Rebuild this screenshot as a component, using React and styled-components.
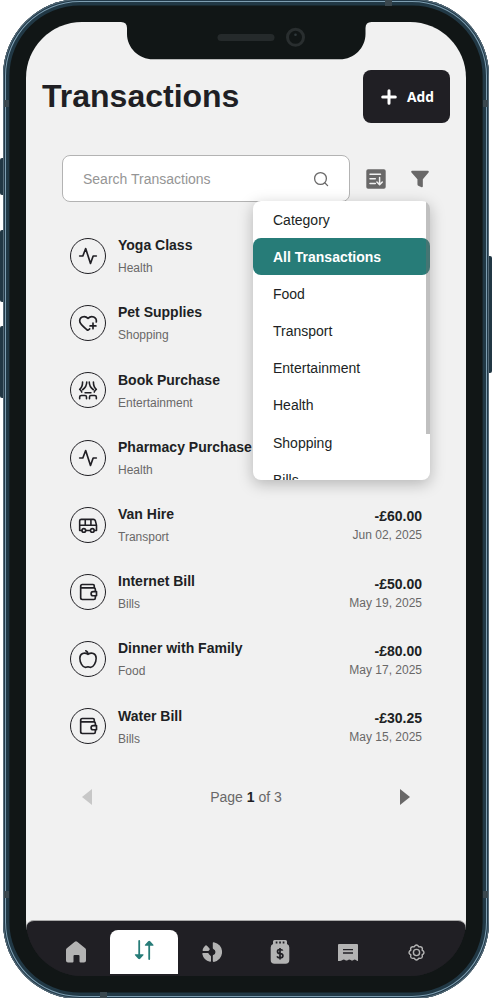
import React from "react";
import styled, { createGlobalStyle } from "styled-components";

const GlobalStyle = createGlobalStyle`
  *, *::before, *::after { box-sizing: border-box; }
  html, body { margin: 0; background: #fff; overflow: hidden; }
  body { font-family: "Liberation Sans", Arial, Helvetica, sans-serif; color: #201f24; }
  button, input { font: inherit; border: 0; padding: 0; background: none; color: inherit; }
  svg { display: block; flex: none; }
`;

const Stage = styled.div`
  position: relative;
  width: 492px;
  height: 998px;
  overflow: hidden;
`;

const Device = styled.div`
  position: relative;
  width: 486px;
  height: 1000px;
  margin: -1px 3px 0;
  padding: 23px 23px;
  border-radius: 77px;
  background: #111616;
  box-shadow: inset 0 0 0 1px #566b78, inset 0 0 0 2px #213949,
    inset 0 0 0 3px #7e9eb1, inset 0 0 0 6.4px #213845;
`;

const SideKey = styled.span`
  position: absolute;
  top: ${(p) => p.$top}px;
  ${(p) => p.$side}: 0;
  width: 4px;
  height: ${(p) => p.$length}px;
  border-radius: ${(p) => (p.$side === "left" ? "2px 0 0 2px" : "0 2px 2px 0")};
  background: #213744;
`;

const Antenna = styled.span`
  position: absolute;
  top: ${(p) => p.$top}px;
  left: ${(p) => p.$left}px;
  width: ${(p) => (p.$flat ? 7 : 5)}px;
  height: ${(p) => (p.$flat ? 5.5 : 7)}px;
  background: #3a474e;
`;

const NotchShape = styled.svg`
  position: absolute;
  top: 21px;
  left: 118px;
`;

const Screen = styled.main`
  display: flex;
  flex-direction: column;
  width: 440px;
  height: 954px;
  border-radius: 56px;
  background: linear-gradient(#f1f1f1 908px, #201f24 908px);
  overflow: hidden;
`;

const Header = styled.header`
  display: flex;
  align-items: center;
  justify-content: space-between;
  height: 53px;
  margin: 48px 16px 0;
`;

const Title = styled.h1`
  margin: 0 0 1px;
  font-size: 32px;
  line-height: 52px;
`;

const AddButton = styled.button`
  display: flex;
  align-items: center;
  gap: 10px;
  width: 87px;
  height: 53px;
  padding-left: 18px;
  border-radius: 8px;
  background: #201f24;
  color: #fff;
  font: 700 13.8px/18px "Open Sans", sans-serif;
`;

const Toolbar = styled.div`
  display: flex;
  align-items: center;
  margin: 32px 36px 0;
  height: 47px;
`;

const SearchBox = styled.label`
  display: flex;
  align-items: center;
  justify-content: space-between;
  width: 288px;
  height: 47px;
  padding: 0 20px;
  border: 1px solid #b3b3b3;
  border-radius: 8px;
  background: #fff;
`;

const SearchInput = styled.input`
  width: 190px;
  font-size: 14px;
  outline: 0;
  &::placeholder { color: #959595; opacity: 1; }
`;

const SortButton = styled.button`
  margin-left: 16px;
`;

const FilterControl = styled.div`
  position: relative;
  margin-left: 25px;
`;

const Menu = styled.ul`
  position: absolute;
  top: 31px;
  right: -1px;
  z-index: 2;
  width: 177px;
  height: 279px;
  margin: 0;
  padding: 0;
  list-style: none;
  border-radius: 8px;
  background: #fff;
  overflow: hidden;
  box-shadow: 0 4px 15px rgba(0, 0, 0, 0.25);
`;

const MenuItem = styled.li`
  height: 37.2px;
  padding-left: 20px;
  border-radius: 8px;
  font-size: 14px;
  line-height: 38px;
  font-weight: ${(p) => (p.$active ? 700 : 400)};
  background: ${(p) => (p.$active ? "#277c78" : "transparent")};
  color: ${(p) => (p.$active ? "#fff" : "#201f24")};
`;

const MenuScrollThumb = styled.span`
  position: absolute;
  top: 0;
  right: 0;
  width: 4px;
  height: 233px;
  background: rgba(110, 110, 110, 0.43);
`;

const List = styled.ul`
  margin: 20.5px 44px 0;
  padding: 0;
  list-style: none;
`;

const Row = styled.li`
  display: flex;
  align-items: center;
  gap: 12px;
  height: 67.2px;
`;

const IconRing = styled.span`
  display: flex;
  align-items: center;
  justify-content: center;
  width: 36px;
  height: 36px;
  border: 1px solid #201f24;
  border-radius: 50%;
`;

const Details = styled.div`
  display: flex;
  flex-direction: column;
  gap: 7px;
  flex: 1;
  padding-top: 1.4px;
`;

const Name = styled.span`
  font-size: 14px;
  line-height: 16px;
  font-weight: 700;
  white-space: nowrap;
`;

const Caption = styled.span`
  font-size: 12px;
  line-height: 16px;
  color: #696868;
`;

const Money = styled.div`
  display: flex;
  flex-direction: column;
  align-items: flex-end;
  gap: 3px;
  padding-top: 2px;
`;

const Pager = styled.nav`
  display: flex;
  align-items: center;
  justify-content: space-between;
  height: 20px;
  margin: 26.5px 56px 0;
  font-size: 14px;
  color: #696868;
  strong { color: #201f24; }
`;

const TabBar = styled.nav`
  display: flex;
  align-items: flex-end;
  height: 56px;
  margin-top: auto;
  padding: 0 16px 2px;
  border-top: 1px solid #aaa;
  border-radius: 8px 8px 0 0;
  background: #201f24;
`;

const Tab = styled.button`
  display: flex;
  align-items: center;
  justify-content: center;
  width: 68px;
  height: 44px;
  padding-bottom: ${(p) => (p.$active ? "5px" : 0)};
  border-radius: 8px 8px 0 0;
  background: ${(p) => (p.$active ? "#fff" : "transparent")};
  color: ${(p) => (p.$active ? "#277c78" : "#b3b3b3")};
`;

const Line = ({ size = 20, weight = 2, children }) => (
  <svg width={size} height={size} viewBox="0 0 24 24" fill="none" stroke="currentColor"
    strokeWidth={weight} strokeLinecap="round" strokeLinejoin="round">{children}</svg>
);

const categoryIcons = {
  Health: <Line><path d="M2 12h3.8L9.200 3l5.800 18 3.200-9H22" /></Line>,
  Shopping: (
    <Line>
      <path d="M22 10.800c.8-5.800-5.800-8.800-10-4.300C7.800 2 .8 5.200 2.300 11.200c.9 2.700 5 6 8.400 8.900q1.200 1 2.500-.3l.8-.8M18 12v7M14.500 15.500h7" />
    </Line>
  ),
  Entertainment: (
    <Line weight={1.9}>
      <path d="M5.500 2.500c0 4-1.200 7-3.500 8.800 1.400 1 2.200 2.200 2.500 3.200M10.500 2.500c0 4.500-1.800 7-5 9.200M18.500 2.500c0 4 1.200 7 3.500 8.800-1.400 1-2.200 2.200-2.500 3.200M13.500 2.500c0 4.500 1.800 7 5 9.200M8.500 15.300h7M2 22.500v-2q0-2 2-2h4.500q1.700 0 1.700 2v2M13.800 22.500v-2q0-2 1.700-2H20q2 0 2 2v2" />
    </Line>
  ),
  Transport: (
    <Line weight={1.9}>
      <path d="M4.500 18.500H2V7q0-1.800 2-1.800h14.500q1.800 0 2.300 1.800l1.400 5.200v6.300h-2.500M9.500 18.500h5M2 12.200h20M8.700 5.200v7M15.500 5.200v7" />
      <circle cx="7" cy="18.500" r="2.200" /><circle cx="17.200" cy="18.500" r="2.200" />
    </Line>
  ),
  Bills: (
    <Line>
      <path d="M19.500 7V4.500q0-1.500-1.500-1.500H5.200Q3.200 3 3.200 5t2 2H19q1.800 0 1.800 1.800V11M3.200 5v14q0 2 2 2H19q1.800 0 1.800-1.800V17" />
      <path d="M22.200 11.500h-4a2.500 2.500 0 0 0 0 5h4Z" />
    </Line>
  ),
  Food: (
    <Line weight={1.900}>
      <path d="M12 6.500C8 3.500 2.200 5 2.200 11c0 5 3.200 11 6.800 11 1.300 0 2-.6 3-.6s1.700.6 3 .6c3.600 0 6.800-6 6.800-11 0-6-5.800-7.500-9.800-4.500ZM12 6.500c0-2-1-3.700-2.700-4.300" />
    </Line>
  ),
};

const transactions = [
  { name: "Yoga Class", category: "Health" },
  { name: "Pet Supplies", category: "Shopping" },
  { name: "Book Purchase", category: "Entertainment" },
  { name: "Pharmacy Purchase", category: "Health" },
  { name: "Van Hire", category: "Transport", amount: "-£60.00", date: "Jun 02, 2025" },
  { name: "Internet Bill", category: "Bills", amount: "-£50.00", date: "May 19, 2025" },
  { name: "Dinner with Family", category: "Food", amount: "-£80.00", date: "May 17, 2025" },
  { name: "Water Bill", category: "Bills", amount: "-£30.25", date: "May 15, 2025" },
];

const menuItems = ["Category", "All Transactions", "Food", "Transport", "Entertainment", "Health", "Shopping", "Bills"];

const tabs = [
  ["Home", <svg width="20" height="22" viewBox="0 0 20 22"><path fill="currentColor" d="M0 8.900Q0 7.900.8 7.200L8.800.7q1.200-1 2.400 0l8 6.500q.8.700.8 1.700V19.500q0 2-2 2h-3.500q-1 0-1-1V15q0-1-1-1h-4q-1 0-1 1v5.500q0 1-1 1H2q-2 0-2-2Z" /></svg>],
  ["Transactions", <svg width="20" height="20" viewBox="0 0 20 20"><path d="M5.200 1v14M15.200 19V5" fill="none" stroke="currentColor" strokeWidth="1.800" strokeLinecap="round" /><path fill="currentColor" d="M1.400 14.200h7.600q1 .2.400 1.100l-3.200 3.500q-1 .8-2 0L1 15.300q-.6-.9.400-1.100ZM11.400 5.800H19q1-.2.400-1.100l-3.200-3.500q-1-.8-2 0L11 4.700q-.6.900.4 1.100Z" /></svg>],
  ["Budgets", <svg width="20" height="20" viewBox="0 0 20 20"><g fill="currentColor"><path d="M10.800 1q0-1 1-.8a10 10 0 0 1 0 19.700q-1 .1-1-.8v-5a1 1 0 0 1 .5-1 3.300 3.300 0 0 0 0-6.200 1 1 0 0 1-.5-1Z" /><path d="M9 19q0 1-1 .7A10 10 0 0 1 .3 12q-.2-1 .8-1h4.700q.7 0 1 .8a3.300 3.300 0 0 0 1.500 1.600q.7.300.7 1Z" /><path d="M1.300 9Q.4 9 .6 8q.6-2.400 2.500-4.300 1-.9 1.900.1l2.500 2.700q.6.700 0 1.300-.6 1.200-1.500 1.200Z" /></g></svg>],
  ["Pots", <svg width="20" height="24" viewBox="0 0 20 24"><path fill="currentColor" d="M4.500 0h11q1.500 0 1.500 1.500V4q2.300.8 2.300 3.500V20q0 3.800-3.800 3.800h-11Q.7 23.800.7 20V7.500Q.7 4.800 3 4V1.500Q3 0 4.500 0Z" /><path d="M5.700 2.500h1.700M9.200 2.500h1.700M12.700 2.500h1.700" stroke="#201f24" strokeWidth="1.800" /><path d="M12.700 10.700q-.5-1.200-2.700-1.200-2.500 0-2.500 2t2.500 2.100q2.900.1 2.900 2.200t-2.900 2.100q-2.300 0-3-1.500M10 8v11.500" fill="none" stroke="#201f24" strokeWidth="1.700" /></svg>],
  ["Bills", <svg width="20" height="17" viewBox="0 0 20 17"><path fill="currentColor" d="M1 0h18q1 0 1 1v16q-1 0-2.100-1-1.200-1-2.400 0-1.400 1-2.800 0-1.400-1-2.800 0-1.400 1-2.800 0-1.400-1-2.600 0-1.400 1-2.800 1-1.200 0-1.700 0V1q0-1 1-1Z" /><path d="M5 5.700h10M5 9h10" stroke="#201f24" strokeWidth="1.300" /></svg>],
  ["Settings", <svg width="17" height="17" viewBox="0 0 24 24" fill="none" stroke="currentColor" strokeWidth="2" strokeLinejoin="round"><path d="M10 2.200q2-1.400 4 0l1.300 1.900 2.300-.3q2.600.3 2.700 2.700l-.3 2.200 1.800 1.300q1.400 2 0 4L20 15.300l.3 2.300q-.2 2.500-2.700 2.700l-2.300-.4-1.300 1.900q-2 1.400-4 0l-1.300-1.900-2.300.4q-2.500-.2-2.700-2.700l.3-2.300L2.200 14q-1.400-2 0-4L4 8.700l-.3-2.200Q3.800 4.100 6.400 3.800l2.300.3Z" /><circle cx="12" cy="12" r="4.400" /></svg>],
];

const Notch = () => (
  <NotchShape width="252" height="40" viewBox="0 0 252 40">
    <path fill="#111616" d="M0 0H252V2H250.500Q244.500 2 244.500 8V14C244.500 28 233 39.300 219 39.300H32C18 39.300 6 28 6 14V8Q6 2 0 2Z" />
    <rect x="96.500" y="14" width="57" height="7" rx="3.500" fill="#252a2b" />
    <circle cx="174.500" cy="17.300" r="8" fill="#111616" stroke="#292e2f" strokeWidth="3" />
    <circle cx="174.500" cy="14.800" r="1.300" fill="#30393c" />
  </NotchShape>
);

export default function App() {
  return (
    <>
      <GlobalStyle />
      <Stage>
        <SideKey $side="left" $top={158} $length={37} />
        <SideKey $side="left" $top={230} $length={72} />
        <SideKey $side="left" $top={326} $length={72} />
        <SideKey $side="right" $top={256} $length={117} />
        <Device>
          <Screen>
            <Header>
              <Title>Transactions</Title>
              <AddButton>
                <svg width="16" height="16" viewBox="0 0 16 16"><path d="M8 1.700v12.600M1.700 8h12.600" stroke="currentColor" strokeWidth="3" strokeLinecap="round" /></svg>
                Add
              </AddButton>
            </Header>
            <Toolbar>
              <SearchBox>
                <SearchInput placeholder="Search Transactions" />
                <svg width="16" height="16" viewBox="0 0 16 16" fill="none" stroke="#696868" strokeWidth="1.300" strokeLinecap="round"><circle cx="7.500" cy="7.500" r="5.900" /><path d="m12 12 2.600 2.600" /></svg>
              </SearchBox>
              <SortButton aria-label="Sort">
                <svg width="20" height="20" viewBox="0 0 20 20" fill="none">
                  <rect x=".3" y=".3" width="19.400" height="19.400" rx="1.800" fill="#696868" />
                  <path d="M4 5.300h10.500M4 9.800h5.300M4 14.500h5.300M13.600 8.500v7M10.900 13l2.700 2.700 2.700-2.700" stroke="#f1f1f1" strokeWidth="1.500" strokeLinecap="round" strokeLinejoin="round" />
                </svg>
              </SortButton>
              <FilterControl>
                <svg width="18" height="18" viewBox="0 0 19 18" preserveAspectRatio="none"><path fill="#696868" d="M1.200.8h16.600q1.500.2.700 1.700l-6 6.800v7.100q-.2 1-1.300.8l-3.500-1.500q-.9-.5-.9-1.500V9.300L.5 2.500Q-.3 1 1.200.8Z" /></svg>
                <Menu>
                  {menuItems.map((item) => (
                    <MenuItem key={item} $active={item === "All Transactions"}>{item}</MenuItem>
                  ))}
                  <MenuScrollThumb />
                </Menu>
              </FilterControl>
            </Toolbar>
            <List>
              {transactions.map(({ name, category, amount, date }) => (
                <Row key={name}>
                  <IconRing>{categoryIcons[category]}</IconRing>
                  <Details>
                    <Name>{name}</Name>
                    <Caption>{category}</Caption>
                  </Details>
                  {amount && (
                    <Money>
                      <Name>{amount}</Name>
                      <Caption>{date}</Caption>
                    </Money>
                  )}
                </Row>
              ))}
            </List>
            <Pager>
              <svg width="10" height="16" viewBox="0 0 10 16"><path d="M10 0v16L0 8Z" fill="#c7c7c7" /></svg>
              <span>Page <strong>1</strong> of 3</span>
              <svg width="10" height="16" viewBox="0 0 10 16"><path d="M0 0v16L10 8Z" fill="#696868" /></svg>
            </Pager>
            <TabBar>
              {tabs.map(([label, icon]) => (
                <Tab key={label} aria-label={label} $active={label === "Transactions"}>{icon}</Tab>
              ))}
            </TabBar>
          </Screen>
          <Notch />
          <Antenna $left={1} $top={101} />
          <Antenna $left={480} $top={101} />
          <Antenna $left={1} $top={892} />
          <Antenna $left={480} $top={892} />
          <Antenna $flat $left={382} $top={1} />
          <Antenna $flat $left={97} $top={993} />
        </Device>
      </Stage>
    </>
  );
}
